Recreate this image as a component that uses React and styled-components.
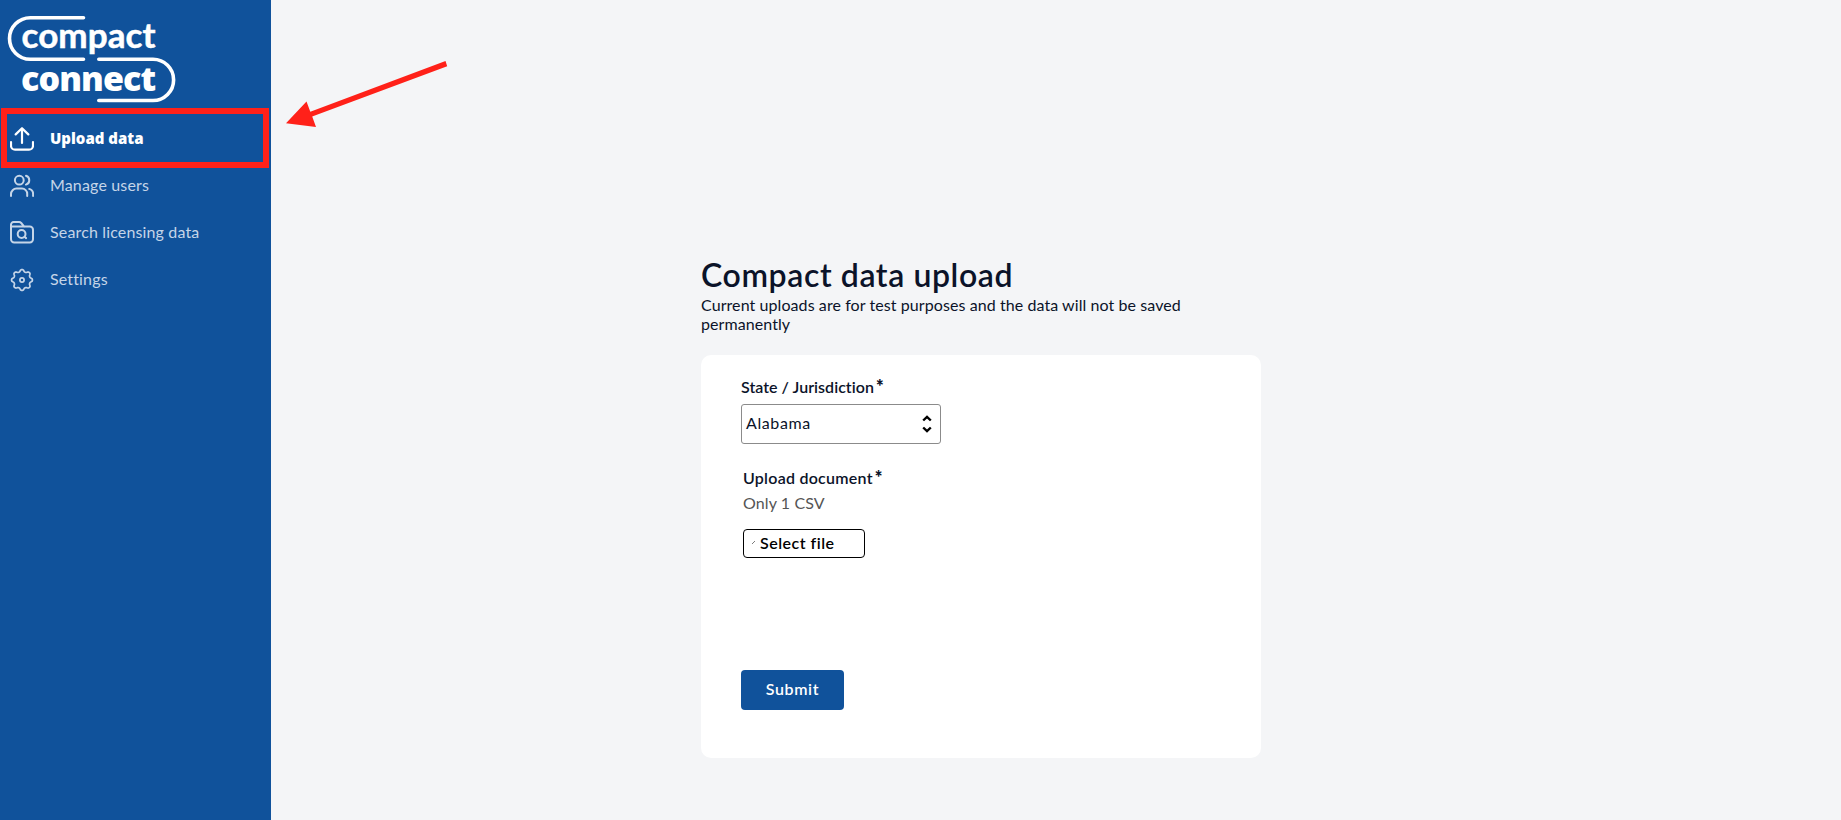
import React from 'react';
import styled, { createGlobalStyle, css } from 'styled-components';

const GlobalStyle = createGlobalStyle`
  * { box-sizing: border-box; }
  body {
    margin: 0;
    background: #f4f5f7;
    color: #0b1329;
    font: 16px/19px Lato, "Open Sans", sans-serif;
  }
`;

const Page = styled.div`
  display: flex;
  height: 820px;
  position: relative;
  overflow: hidden;
`;

const Sidebar = styled.aside`
  width: 271px;
  flex: none;
  background: #10529b;
  color: #fff;
`;

const Logo = styled.svg`
  display: block;
  width: 184px;
  height: 115px;
  fill: none;
  stroke: #fff;
  stroke-width: 3.6;
  stroke-linecap: round;

  text {
    fill: #fff;
    stroke: none;
  }
`;

const CompactWord = styled.text`
  font: 700 35px Lato, sans-serif;
  letter-spacing: 0.1px;

  && {
    stroke: #fff;
    stroke-width: 0.5;
  }
`;

const ConnectWord = styled.text`
  font: 800 34px "Open Sans", sans-serif;
  letter-spacing: -0.9px;
`;

const NavItem = styled.a`
  display: flex;
  align-items: center;
  gap: 16px;
  height: 47px;
  padding-left: 10px;
  color: #c5d5e8;
  letter-spacing: 0.15px;
  ${({ $active }) => $active && css`
    color: #fff;
    font: 800 15px/19px "Open Sans", sans-serif;
    letter-spacing: 0;
  `}
`;

const NavLabel = styled.span`
  padding-bottom: ${({ $active }) => ($active ? 0 : 2)}px;
`;

const NavIcon = styled.svg`
  width: 24px;
  height: 24px;
  margin-top: 1px;
  fill: none;
  stroke: currentColor;
  stroke-width: ${({ $weight }) => $weight || 2};
  stroke-linecap: round;
  stroke-linejoin: round;
`;

const Main = styled.main`
  flex: 1;
  padding: 256px 0 0 430px;
`;

const Title = styled.h1`
  margin: 0 0 1px;
  font-size: 32px;
  line-height: 38px;
  font-weight: 600;
  letter-spacing: 0.6px;
`;

const Subtitle = styled.p`
  width: 560px;
  margin: 0 0 22px;
  letter-spacing: 0.08px;
`;

const Card = styled.form`
  display: flex;
  flex-direction: column;
  align-items: flex-start;
  width: 560px;
  height: 403px;
  padding: 22px 40px;
  border-radius: 10px;
  background: #fff;
`;

const Field = styled.div`
  display: flex;
  flex-direction: column;
`;

const UploadField = styled(Field)`
  margin: 24px 0 112px 2px;
`;

const Label = styled.label`
  display: flex;
  gap: 2px;
  font-weight: 600;
  letter-spacing: ${({ $tracking }) => $tracking}px;
`;

const Required = styled.span`
  font-weight: 800;
  font-size: 18px;
`;

const SelectBox = styled.div`
  display: flex;
  align-items: center;
  justify-content: space-between;
  width: 200px;
  height: 40px;
  margin-top: 8px;
  padding: 0 8px 0 4px;
  border: 1px solid #8b8b8b;
  border-radius: 3px;
  letter-spacing: 0.6px;
`;

const SelectValue = styled.span`
  padding-bottom: 3px;
`;

const SelectArrows = styled.svg`
  width: 10px;
  height: 20px;
  fill: none;
  stroke: #000;
  stroke-width: 2.4;
`;

const Hint = styled.span`
  margin: 6px 0 17px;
  color: #555;
  letter-spacing: 0.1px;
`;

const FileButton = styled.button`
  display: flex;
  align-items: center;
  gap: 5px;
  width: 122px;
  height: 29px;
  padding: 0 0 3px 8px;
  border: 1px solid #000;
  border-radius: 4px;
  background: #fff;
  color: #000;
  font: 600 16px/19px Lato, sans-serif;
  letter-spacing: 0.5px;
`;

const FileMark = styled.svg`
  width: 3px;
  height: 3px;
  stroke: #444;
  stroke-width: 0.7;
`;

const SubmitButton = styled.button`
  width: 103px;
  height: 40px;
  padding: 0 0 3px;
  border: 0;
  border-radius: 4px;
  background: #10529b;
  color: #fff;
  font: 600 16px/19px Lato, sans-serif;
  letter-spacing: 0.6px;
`;

const Highlight = styled.div`
  position: absolute;
  left: 1px;
  top: 108px;
  width: 268px;
  height: 60px;
  border: 6px solid #ff2119;
`;

const Pointer = styled.svg`
  position: absolute;
  left: 280px;
  top: 55px;
  width: 180px;
  height: 80px;
  fill: #ff2119;
`;

const gearOutline = Array.from({ length: 96 }, (_, i) => {
  const a = (i / 96) * Math.PI * 2;
  const r = 9.4 + 1.1 * Math.tanh(1.6 * Math.cos(8 * a));
  return `${(12 + r * Math.cos(a)).toFixed(2)},${(12 + r * Math.sin(a)).toFixed(2)}`;
}).join(' ');

const UploadIcon = () => (
  <NavIcon viewBox="0 0 24 24" $weight={2.2}>
    <path d="M1 15v3.7a4 4 0 0 0 4 4h14a4 4 0 0 0 4-4V15M12 16V1.4M5.7 7.4 12 1.2l6.3 6.2" />
  </NavIcon>
);

const UsersIcon = () => (
  <NavIcon viewBox="0 0 24 24">
    <circle cx="9.3" cy="6.2" r="4.4" />
    <path d="M16 1.8a4.6 4.6 0 0 1 0 8.8M1 22v-2a5.5 5.5 0 0 1 5.5-5.4H12a5.2 5.2 0 0 1 5.2 5.2V22M19.2 14.9a5.200 5.200 0 0 1 3.900 5V22" />
  </NavIcon>
);

const FolderSearchIcon = () => (
  <NavIcon viewBox="0 0 24 24">
    <path d="M1 6V3.600a2.500 2.500 0 0 1 2.500-2.500H9a3 3 0 0 1 2.200.9l3 3.600M1.200 5.600h18.600A3.200 3.200 0 0 1 23 8.800v9.400a3.200 3.200 0 0 1-3.200 3.200H4.200A3.200 3.200 0 0 1 1 18.200V5.600" />
    <circle cx="11.600" cy="13" r="3.900" />
    <path d="m14.500 15.800 1.600 1.300" />
  </NavIcon>
);

const GearIcon = () => (
  <NavIcon viewBox="0 0 24 24" $weight={1.7}>
    <polygon points={gearOutline} />
    <circle cx="12" cy="12" r="2.1" />
  </NavIcon>
);

const navigation = [
  { label: 'Upload data', Icon: UploadIcon, active: true },
  { label: 'Manage users', Icon: UsersIcon },
  { label: 'Search licensing data', Icon: FolderSearchIcon },
  { label: 'Settings', Icon: GearIcon },
];

export default function App() {
  return (
    <Page>
      <GlobalStyle />
      <Sidebar>
        <Logo viewBox="0 0 184 115">
          <path d="M83.500 17.700H30.300a20.800 20.800 0 0 0 0 41.600h53.200M98.800 59.300h54.200a20.600 20.600 0 0 1 0 41.200H98.800" />
          <CompactWord x="21.500" y="47.600">compact</CompactWord>
          <ConnectWord x="21" y="90.500">connect</ConnectWord>
        </Logo>
        <nav>
          {navigation.map(({ label, Icon, active }) => (
            <NavItem key={label} $active={active}>
              <Icon />
              <NavLabel $active={active}>{label}</NavLabel>
            </NavItem>
          ))}
        </nav>
      </Sidebar>
      <Main>
        <Title>Compact data upload</Title>
        <Subtitle>Current uploads are for test purposes and the data will not be saved permanently</Subtitle>
        <Card>
          <Field>
            <Label $tracking={0.03}>State / Jurisdiction<Required>*</Required></Label>
            <SelectBox>
              <SelectValue>Alabama</SelectValue>
              <SelectArrows viewBox="0 0 10 20">
                <path d="M1.200 6.500 5 2.900l3.800 3.600M1.200 13.500 5 17.100l3.800-3.600" />
              </SelectArrows>
            </SelectBox>
          </Field>
          <UploadField>
            <Label $tracking={0.25}>Upload document<Required>*</Required></Label>
            <Hint>Only 1 CSV</Hint>
            <FileButton type="button">
              <FileMark viewBox="0 0 3 3"><path d="M0 3 3 0" /></FileMark>
              <span>Select file</span>
            </FileButton>
          </UploadField>
          <SubmitButton type="button">Submit</SubmitButton>
        </Card>
      </Main>
      <Highlight />
      <Pointer viewBox="280 55 180 80">
        <path d="M286 123.300 306.500 101.500 310.300 111.700 445.500 61 447.200 66.300 312.200 116.600 316 127Z" />
      </Pointer>
    </Page>
  );
}
